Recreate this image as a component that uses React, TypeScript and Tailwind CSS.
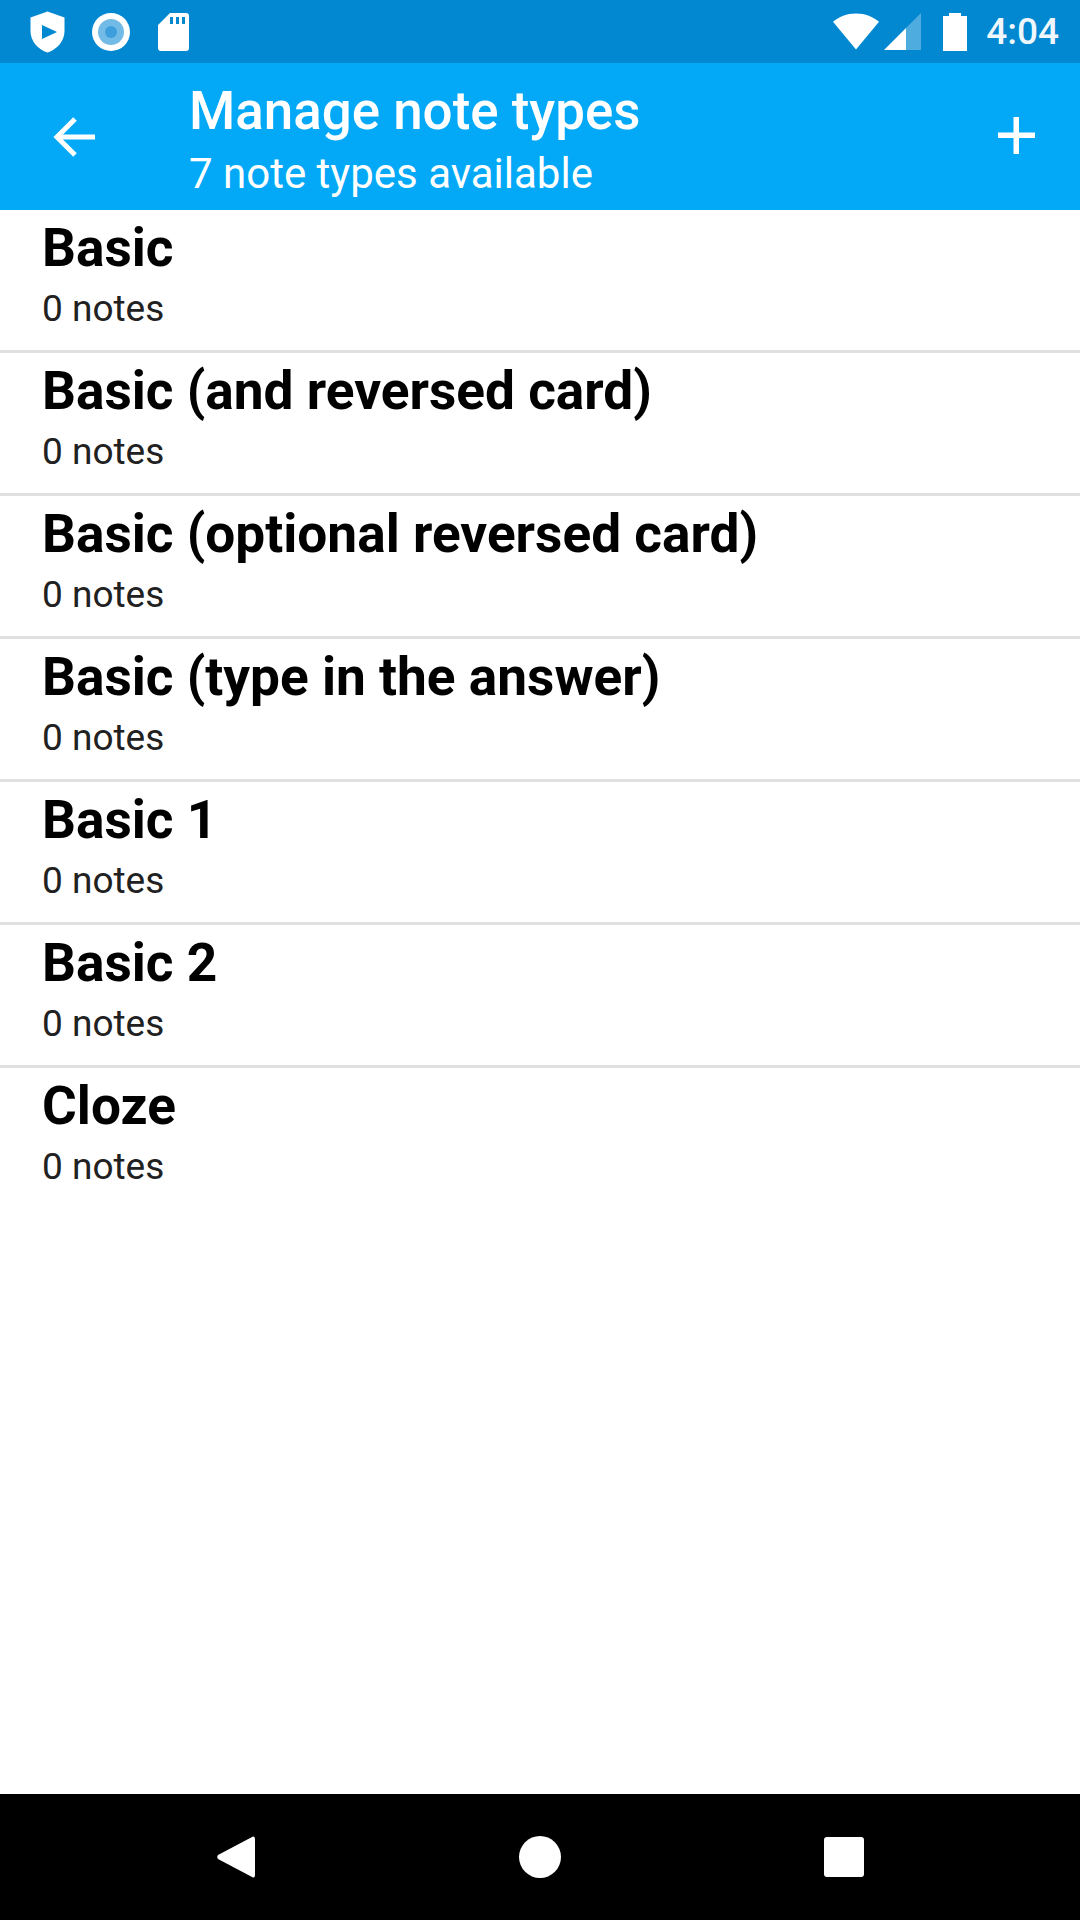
const noteTypes = [
  "Basic",
  "Basic (and reversed card)",
  "Basic (optional reversed card)",
  "Basic (type in the answer)",
  "Basic 1",
  "Basic 2",
  "Cloze",
];

const StatusBar = () => (
  <div className="flex h-[63px] items-center justify-between bg-[#0288d1] pl-[30px] pr-[21px]">
    <div className="flex items-center gap-[27px]">
      {/* shield with play */}
      <svg width="35" height="42" viewBox="0 0 35 42" fill="none">
        <path
          fillRule="evenodd"
          d="M17.5 0.5 L34.5 6.5 V20 C34.5 30 27 38.5 17.5 41.5 C8 38.5 0.5 30 0.5 20 V6.5 Z M12 14 V28 L27 21 Z"
          fill="#fff"
        />
      </svg>
      <svg width="38" height="38" viewBox="0 0 38 38">
        <circle cx="19" cy="19" r="19" fill="#fff" />
        <circle cx="19" cy="19" r="13" fill="#72bbe6" />
        <circle cx="19" cy="19" r="6" fill="#3e9fdc" />
      </svg>
      <svg width="31" height="38" viewBox="0 0 31 38" className="ml-[1px]">
        <path
          fillRule="evenodd"
          d="M12 0 H28 a3 3 0 0 1 3 3 V35 a3 3 0 0 1 -3 3 H3 a3 3 0 0 1 -3 -3 V12 Z M12 4 V11 H15 V4 Z M18 4 V11 H21 V4 Z M24 4 V11 H27 V4 Z"
          fill="#fff"
        />
      </svg>
    </div>
    <div className="flex items-center">
      <svg width="46" height="37" viewBox="0 0 47 37" className="mr-[5px]">
        <path d="M23.5 37 L0 8.5 C6 3.5 14 0 23.5 0 C33 0 41 3.5 47 8.5 Z" fill="#fff" />
      </svg>
      <svg width="37" height="37" viewBox="0 0 37 37" className="mr-[22px]">
        <path d="M37 0 V37 H22 V15 Z" fill="#fff" opacity="0.3" />
        <path d="M22 15 V37 H0 Z" fill="#fff" />
      </svg>
      <svg width="24" height="38" viewBox="0 0 24 38" className="mr-[19px]">
        <path d="M6 0 H18 V3 H24 V38 H0 V3 H6 Z" fill="#fff" />
      </svg>
      <span className="font-['Roboto',sans-serif] text-[37px] font-medium leading-none text-white/95">4:04</span>
    </div>
  </div>
);

const Toolbar = () => (
  <div className="flex h-[147px] items-center bg-[#03a9f7] text-white">
    <div className="flex w-[189px] justify-start pl-[53px]">
      <svg width="42" height="40" viewBox="0 0 42 40" fill="none" stroke="#fff" strokeWidth="5">
        <path d="M42 20 H3" />
        <path d="M22 2 L4 20 L22 38" />
      </svg>
    </div>
    <div className="flex flex-1 flex-col pt-[6px] font-['Roboto',sans-serif]">
      <span className="text-[52.9px] font-medium leading-[61px]">Manage note types</span>
      <span className="mt-[7px] text-[42px] leading-[50px]">7 note types available</span>
    </div>
    <svg width="37" height="37" viewBox="0 0 37 37" fill="#fff" className="mr-[45px] mb-[2px]">
      <rect x="0" y="15.5" width="37" height="5.5" />
      <rect x="15.5" y="0" width="5.5" height="37" />
    </svg>
  </div>
);

const NavBar = () => (
  <div className="relative flex h-[126px] items-center bg-black">
    <svg width="38" height="42" viewBox="0 0 38 42" className="ml-[217px]">
      <path d="M36 0.5 Q38 0 38 3 V39 Q38 42 36 41.5 L1 23 Q-0.5 21 1 19 Z" fill="#fff" />
    </svg>
    <div className="ml-[264px] h-[42px] w-[42px] rounded-full bg-white" />
    <div className="ml-[263px] h-[40px] w-[40px] rounded-[3px] bg-white" />
  </div>
);

export default function App() {
  return (
    <div className="flex h-[1920px] w-[1080px] flex-col overflow-hidden bg-white">
      <StatusBar />
      <Toolbar />
      <div className="flex-1 font-['Roboto',sans-serif]">
        {noteTypes.map((name, i) => (
          <div
            key={name}
            className={`h-[143px] pl-[42px] pt-[7px] ${i < noteTypes.length - 1 ? "border-b-[3px] border-[#e0e0e0]" : ""}`}
          >
            <div className="text-[53.2px] font-bold leading-[62px] text-black">{name}</div>
            <div className="mt-[8px] text-[37px] leading-[44px] text-[#212121]">0 notes</div>
          </div>
        ))}
      </div>
      <NavBar />
    </div>
  );
}
